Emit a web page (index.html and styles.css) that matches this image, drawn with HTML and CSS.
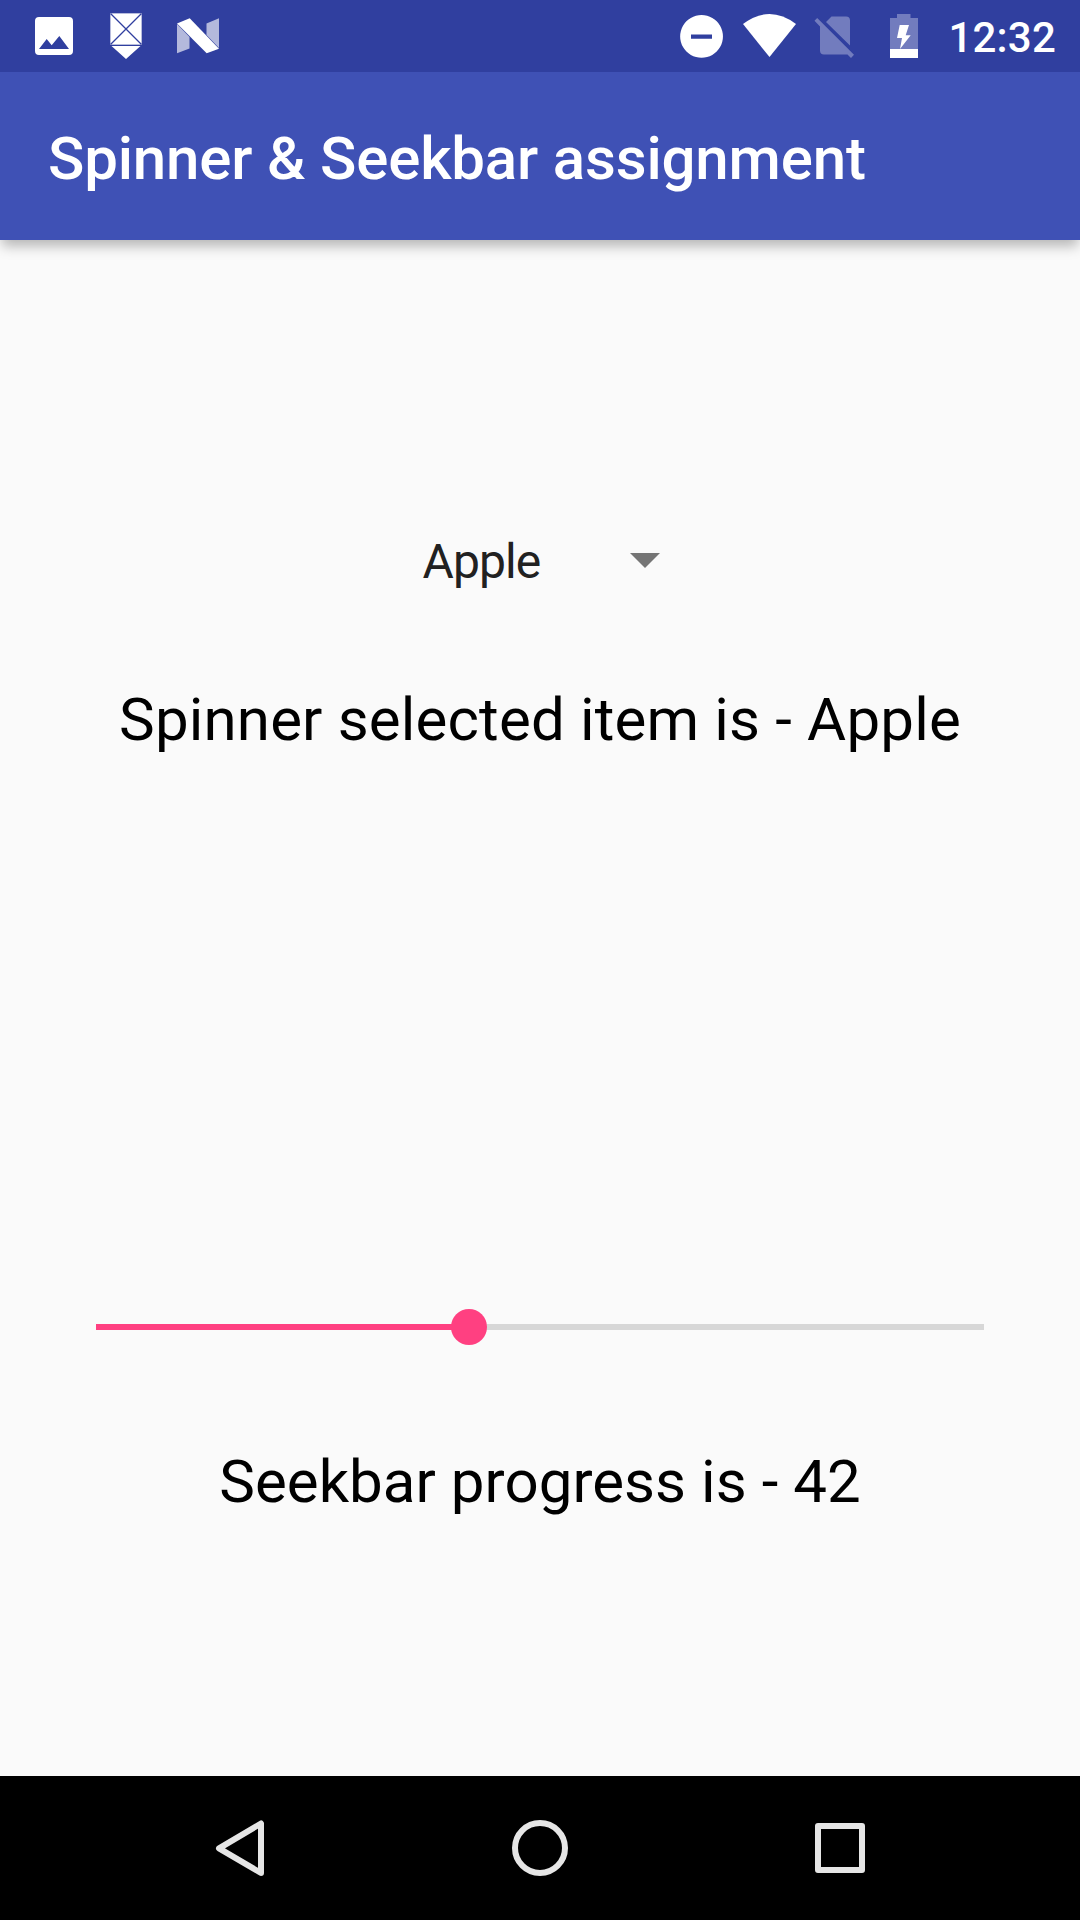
FILE: index.html
```html
<!DOCTYPE html>
<html lang="en">
<head>
<meta charset="utf-8">
<title>Spinner &amp; Seekbar assignment</title>
<link rel="stylesheet" href="styles.css">
</head>
<body>
<div class="screen">
  <header class="status">
    <svg class="status-icons" width="1080" height="72" viewBox="0 0 1080 72" fill="#fff">
      <path fill-rule="evenodd" d="M39 17h30a4 4 0 0 1 4 4v30a4 4 0 0 1-4 4H39a4 4 0 0 1-4-4V21a4 4 0 0 1 4-4zM39 49h30L59.300 36 51.700 45.300 46.700 39z"/>
      <path d="M110 13h32v32h-32zM111.500 46h29L126 59z"/>
      <path d="M110.500 13.500l31 31M141.500 13.500l-31 31" stroke="#303f9f" stroke-width="1.300" fill="none"/>
      <path d="M110.500 13.500h31v31h-31z" stroke="#303f9f" stroke-opacity=".35" fill="none"/>
      <path opacity=".64" d="M177 24l12.500 13v11.500L177 53.300zM219 18.300V48l-12.500-13V23.500z"/>
      <path d="M177 23.500l12.700-5.200L219 48.700l-12.300 4.600z"/>
      <path fill-rule="evenodd" d="M701.500 15a21.400 21.400 0 1 0 .1 0zM691 34.500h21v4.300h-21z"/>
      <path d="M743 24q26.500-20 53 0L769.500 57z"/>
      <path opacity=".32" d="M826 22l5.500-5.500H846a4 4 0 0 1 4 4V45.500zM814.500 20.700l2.700-2.700L854 54.800 851 58l-3.500-3.500H824a4 4 0 0 1-4-4V26.500z"/>
      <path opacity=".32" d="M897 14h13.500v4H918v31h-28V18h7z"/>
      <path d="M890 49h28v9h-28z"/>
      <path d="M899.700 25h9.300l-3.300 10.300h5L900 49l2-11h-5z"/>
    </svg>
    <span class="clock">12:32</span>
  </header>
  <div class="appbar"><h1>Spinner &amp; Seekbar assignment</h1></div>
  <main class="content">
    <div class="spinner"><span>Apple</span><svg class="arrow" width="30" height="15" viewBox="0 0 30 15"><path d="M0 0h30L15 15z" fill="#757575"/></svg></div>
    <p class="label selected">Spinner selected item is - Apple</p>
    <div class="seekbar"><div class="fill" style="width:42%"></div><div class="thumb" style="left:42%"></div></div>
    <p class="label progress">Seekbar progress is - 42</p>
  </main>
  <nav class="nav">
    <svg width="1080" height="144" viewBox="0 0 1080 144" fill="none" stroke="#e6e6e6" stroke-width="6" stroke-linejoin="round">
      <path d="M261 47.500v49.500L219 72.300z"/><circle cx="540" cy="72" r="25"/><rect x="818" y="50" width="44" height="44"/>
    </svg>
  </nav>
</div>
</body>
</html>
```
FILE: styles.css
```css
* { box-sizing: border-box; }
body, h1, p { margin: 0; }
body { font-family: Roboto, sans-serif; background: #fafafa; }
.screen { width: 1080px; height: 1920px; display: flex; flex-direction: column; }
.status { height: 72px; background: #303f9f; position: relative; display: flex; justify-content: flex-end; padding-right: 24px; }
.status-icons { position: absolute; left: 0; top: 0; }
.clock { font-size: 42px; font-weight: 500; color: #fff; line-height: 75px; letter-spacing: .2px; }
.appbar { height: 168px; background: #3f51b5; padding-left: 48px; box-shadow: 0 8px 12px -2px rgba(0,0,0,.28); }
.appbar h1 { font-size: 60px; font-weight: 500; line-height: 174px; color: #fff; white-space: nowrap; letter-spacing: -.17px; }
.content { flex: 1; display: flex; flex-direction: column; align-items: center; }
.spinner { width: 237px; height: 72px; margin: 285px 0 0 2px; display: flex; align-items: center; justify-content: space-between; font-size: 48px; color: #212121; letter-spacing: -.9px; }
.arrow { margin-bottom: 1px; }
.label { font-size: 60px; line-height: 80px; color: #000; white-space: nowrap; }
.selected { margin-top: 83px; letter-spacing: .17px; }
.seekbar { width: 888px; height: 6px; background: #d7d7d7; position: relative; margin-top: 564px; }
.fill { height: 6px; background: #ff4081; }
.thumb { position: absolute; width: 36px; height: 36px; border-radius: 50%; background: #ff4081; top: -15px; margin-left: -18px; }
.progress { margin-top: 112px; letter-spacing: .05px; }
.nav { height: 144px; background: #000; }
```
